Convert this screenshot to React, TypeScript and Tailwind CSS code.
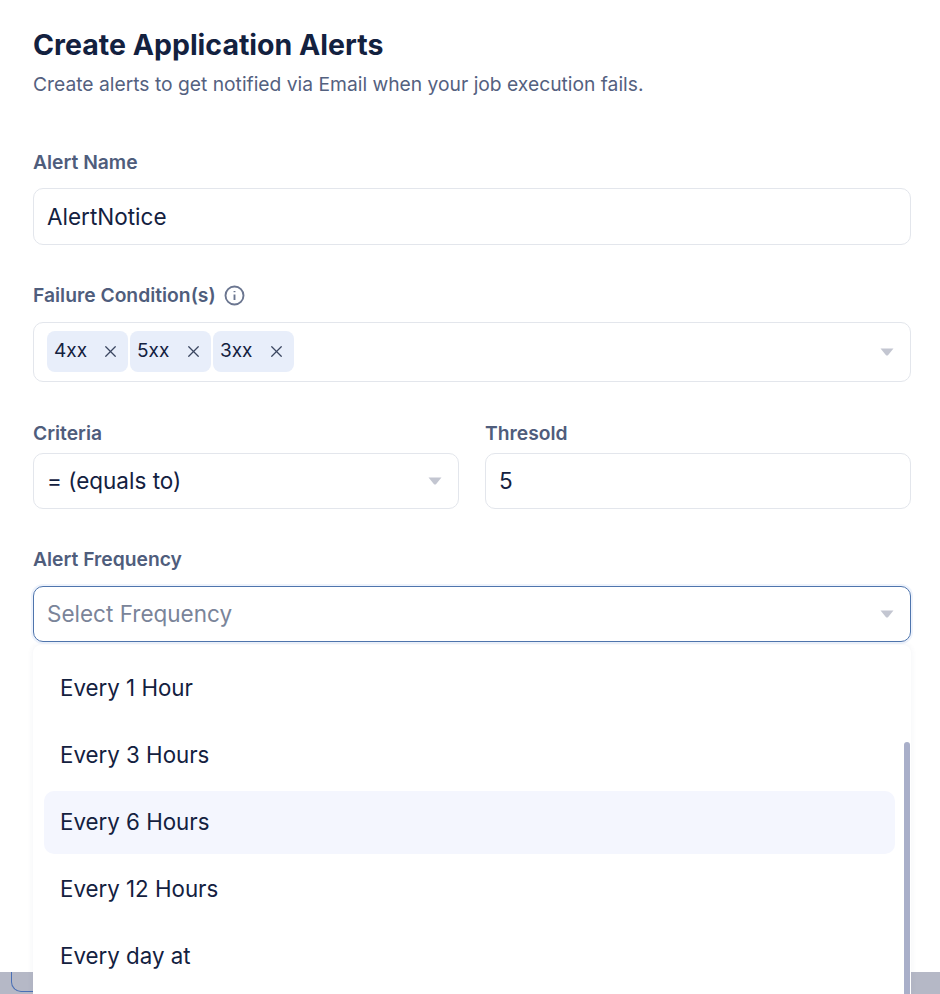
import React from "react";
import { X } from "lucide-react";

const labelCls = "text-[19.3px] leading-[22px] font-semibold text-[#4f5d7c]";
const boxCls = "w-full rounded-[10px] border border-[#e3e6ec] bg-white flex items-center text-[22.5px] text-[#13213f]";

const Caret = () => (
  <svg width="14" height="8" viewBox="0 0 14 8" className="shrink-0">
    <path d="M0.5 0.5H13.5L8 7.2Q7 8 6 7.2Z" fill="#c3c6d1" />
  </svg>
);

const Chip = ({ text }: { text: string }) => (
  <div className="h-[41px] w-[81px] rounded-[8px] bg-[#e8eefa] flex items-center justify-between pl-[8px] pr-[8px] text-[19px]">
    <span className="-ml-[1px]">{text}</span>
    <X size={19} strokeWidth={1.6} className="text-[#3a4660]" />
  </div>
);

const options = ["Every 1 Hour", "Every 3 Hours", "Every 6 Hours", "Every 12 Hours", "Every day at"];

export default function App() {
  return (
    <div className="relative w-[940px] h-[994px] overflow-hidden bg-[#b5b8c6]" style={{ fontFamily: "Inter, sans-serif" }}>
      {/* outline of the page behind the modal */}
      <div className="absolute left-[11px] top-[950px] w-[40px] h-[42px] rounded-bl-[10px] border-l border-b border-[#4a6fb5]" />

      <div className="relative h-[972px] bg-white pl-[33px] pr-[29px] pt-[27px]">
        <h1 className="text-[28.5px] leading-[36px] font-bold text-[#13213f]">Create Application Alerts</h1>
        <p className="mt-[9px] text-[19.25px] leading-[24px] text-[#54617f]">
          Create alerts to get notified via Email when your job execution fails.
        </p>

        <div className={`${labelCls} mt-[55px]`}>Alert Name</div>
        <div className={`${boxCls} mt-[15px] h-[57px] px-[13px]`}>AlertNotice</div>

        <div className={`${labelCls} mt-[39px] flex items-center gap-[8px]`}>
          <span>Failure Condition(s)</span>
          <svg width="21" height="21" viewBox="0 0 21 21" fill="none" stroke="#6b7690" strokeWidth="1.9">
            <circle cx="10.5" cy="10.5" r="9" />
            <path d="M10.5 9.5V15" />
            <path d="M10.5 6V7.2" />
          </svg>
        </div>
        <div className={`${boxCls} mt-[16px] h-[60px] pl-[13px] pr-[16px] justify-between`}>
          <div className="flex gap-[2px] -mt-[2px]">
            <Chip text="4xx" />
            <Chip text="5xx" />
            <Chip text="3xx" />
          </div>
          <Caret />
        </div>

        <div className="mt-[40px] flex gap-[26px]">
          <div className="w-[426px]">
            <div className={labelCls}>Criteria</div>
            <div className={`${boxCls} mt-[9px] h-[56px] px-[13px] pr-[16px] justify-between`}>
              <span>= (equals to)</span>
              <Caret />
            </div>
          </div>
          <div className="flex-1">
            <div className={labelCls}>Thresold</div>
            <div className={`${boxCls} mt-[9px] h-[56px] px-[13px]`}>5</div>
          </div>
        </div>

        <div className={`${labelCls} mt-[39px]`}>Alert Frequency</div>
        <div className={`${boxCls} mt-[16px] h-[56px] pl-[13px] pr-[16px] justify-between !border-[#4f75ad] shadow-[0_0_0_2px_#eef3fc]`}>
          <span className="text-[#7a8499]">Select Frequency</span>
          <Caret />
        </div>
      </div>

      {/* open dropdown hangs over the page bottom */}
      <div className="absolute left-[33px] top-[645px] w-[878px] h-[349px] bg-white rounded-t-[8px] shadow-[0_0_6px_rgba(60,70,110,0.07)] pl-[11px] pr-[16px] pt-[12px]">
        {options.map((o) => (
          <div
            key={o}
            className={`h-[63px] mb-[4px] pb-[2px] rounded-[10px] flex items-center pl-[16px] text-[22.3px] text-[#13213f] ${
              o === "Every 6 Hours" ? "bg-[#f4f6fe]" : ""
            }`}
          >
            {o}
          </div>
        ))}
        <div className="absolute right-[1px] top-[97px] bottom-0 w-[6px] rounded-t-[3px] bg-[#a9afc9]" />
      </div>
    </div>
  );
}
